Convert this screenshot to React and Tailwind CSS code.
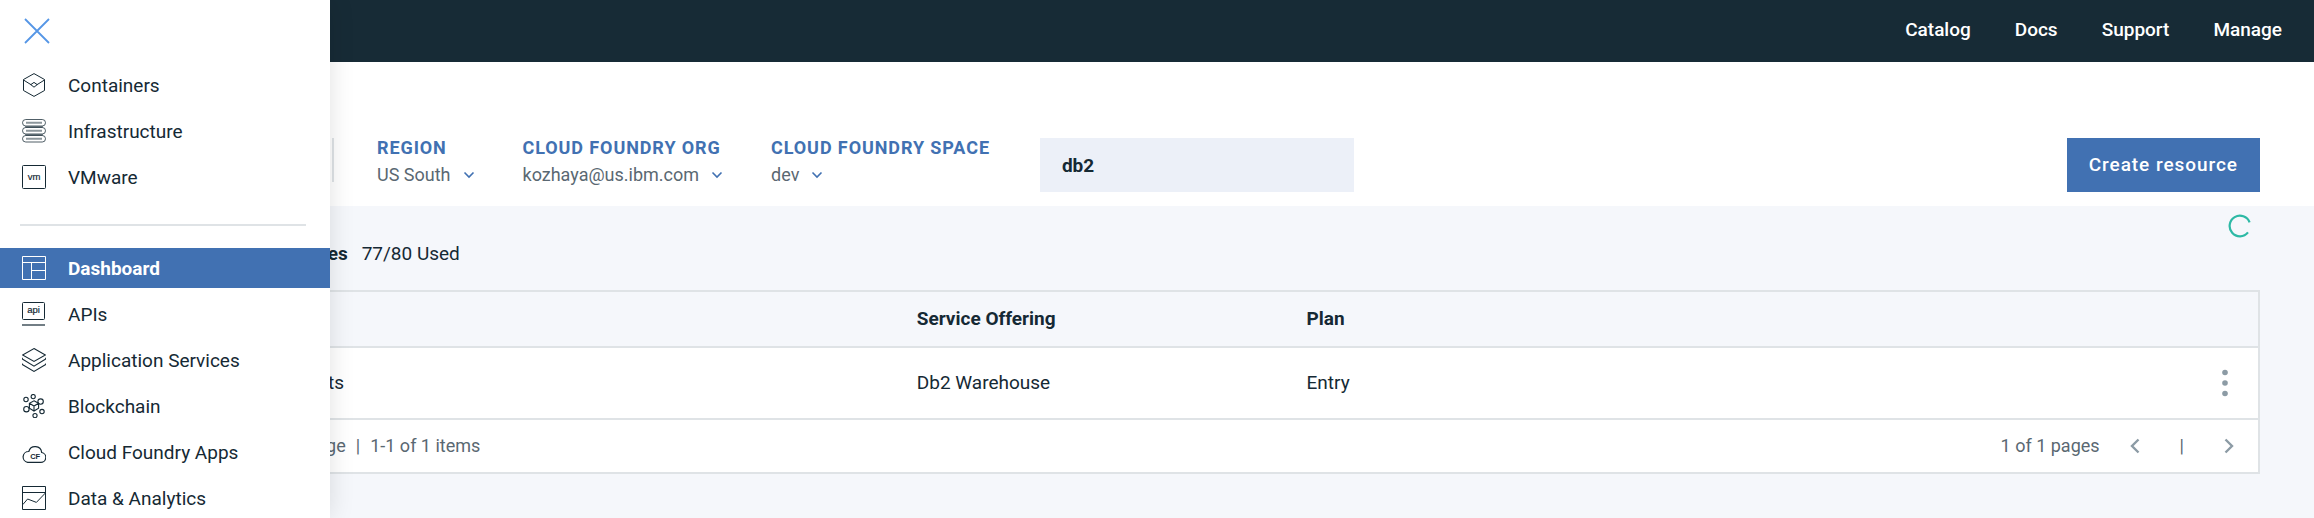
const ink = "text-[#152934]";

function ContainersIcon() {
  return (
    <svg viewBox="0 0 24 24" className="size-6" fill="none" stroke="currentColor" strokeWidth="1" aria-hidden="true">
      <path d="M12 .6 22.5 6.5v11L12 23.4 1.5 17.5v-11z" />
      <path d="M1.5 7 9.2 11.8M22.5 7 14.8 11.8" />
      <path d="M8.8 11.6 12 9.4l3.2 2.2L12 14.2z" />
    </svg>
  );
}

function InfrastructureIcon() {
  return (
    <svg viewBox="0 0 24 24" className="size-6" fill="none" stroke="currentColor" aria-hidden="true">
      <path d="M3 6h18v4H3zM3 14h18v4H3z" fill="#8c969b" stroke="none" />
      {[0.5, 8.5, 16.5].map((y) => (
        <g key={y}>
          <rect x=".5" y={y} width="23" height="6.5" rx="3.25" fill="#fff" strokeOpacity=".75" />
          <path d={`M4 ${y + 3.25}h16`} stroke="#8c969b" strokeWidth="2" />
        </g>
      ))}
    </svg>
  );
}

function VmwareIcon() {
  return (
    <svg viewBox="0 0 24 24" className="size-6" fill="none" stroke="currentColor" aria-hidden="true">
      <rect x=".5" y=".5" width="23" height="23" rx="1" />
      <text x="12" y="14.6" textAnchor="middle" fontSize="9.5" fill="currentColor" stroke="currentColor" strokeWidth=".2" fontFamily="Liberation Sans, sans-serif">vm</text>
    </svg>
  );
}

function DashboardIcon() {
  return (
    <svg viewBox="0 0 24 24" className="size-6" fill="none" stroke="currentColor" aria-hidden="true">
      <path d="M.5.5h23v23H.5zM.5 6.5h23M9.5 6.5v17M9.5 14.5h14" />
    </svg>
  );
}

function ApiIcon() {
  return (
    <svg viewBox="0 0 24 24" className="size-6" fill="none" stroke="currentColor" aria-hidden="true">
      <rect x=".5" y=".5" width="22" height="17" rx="1" />
      <path d="M0 23h23" strokeWidth="1.5" strokeOpacity=".8" />
      <text x="11.5" y="11" textAnchor="middle" fontSize="9.5" fill="currentColor" stroke="currentColor" strokeWidth=".2" fontFamily="Liberation Sans, sans-serif">api</text>
    </svg>
  );
}

function LayersIcon() {
  return (
    <svg viewBox="0 0 24 24" className="size-6" fill="none" stroke="currentColor" strokeWidth="1.1" aria-hidden="true">
      <path d="M12 .6 23.4 7 12 13.4.6 7z" />
      <path d="M.3 9.8V11L12 18.2 23.7 11V9.8M.3 15.6v1L12 23.4l11.7-6.8v-1" />
    </svg>
  );
}

function BlockchainIcon() {
  return (
    <svg viewBox="0 0 24 24" className="size-6" fill="none" stroke="currentColor" strokeWidth="1.1" aria-hidden="true">
      <path d="M12 6.8 16.6 9.3v5L12 17l-4.6-2.7v-5zM7.4 9.3 12 12l4.6-2.7M12 12v5" />
      <circle cx="4" cy="5.5" r="2.2" />
      <circle cx="11.2" cy="2.6" r="2.1" />
      <circle cx="18.6" cy="7.6" r="2.7" />
      <circle cx="4.4" cy="15.2" r="2.7" />
      <circle cx="20" cy="17.6" r="2.2" />
      <circle cx="13" cy="21.6" r="2.1" />
    </svg>
  );
}

function CloudFoundryIcon() {
  return (
    <svg viewBox="0 0 24 24" className="size-6" fill="none" stroke="currentColor" strokeWidth="1.2" aria-hidden="true">
      <path d="M5.6 22.4h12.8a5 5 0 0 0 1.3-9.9 6.6 6.6 0 0 0-12.9-1 5.5 5.5 0 0 0-1.2 10.9z" />
      <text x="13.2" y="19" textAnchor="middle" fontSize="7.5" fontWeight="700" fill="currentColor" stroke="none" fontFamily="Liberation Sans, sans-serif">CF</text>
    </svg>
  );
}

function AnalyticsIcon() {
  return (
    <svg viewBox="0 0 24 24" className="size-6" fill="none" stroke="currentColor" aria-hidden="true">
      <path d="M.5.5h23v23H.5zM.5 6.5h23" />
      <path d="M.8 18.6 5.6 13l8.8 3.4L23.4 7" />
    </svg>
  );
}

const platforms = [
  { label: "Containers", Icon: ContainersIcon },
  { label: "Infrastructure", Icon: InfrastructureIcon },
  { label: "VMware", Icon: VmwareIcon },
];

const services = [
  { label: "Dashboard", Icon: DashboardIcon, active: true },
  { label: "APIs", Icon: ApiIcon },
  { label: "Application Services", Icon: LayersIcon },
  { label: "Blockchain", Icon: BlockchainIcon },
  { label: "Cloud Foundry Apps", Icon: CloudFoundryIcon },
  { label: "Data & Analytics", Icon: AnalyticsIcon },
];

function NavList({ items }) {
  return (
    <ul className="flex flex-col gap-1.5">
      {items.map(({ label, Icon, active }) => (
        <li key={label}>
          <a
            href="#"
            aria-current={active ? "page" : undefined}
            className={
              active
                ? "flex h-10 items-center gap-[22px] bg-[#4171b2] pl-[22px] font-bold text-white"
                : `flex h-10 items-center gap-[22px] pl-[22px] ${ink}`
            }
          >
            <Icon />
            <span className="pt-0.5">{label}</span>
          </a>
        </li>
      ))}
    </ul>
  );
}

function Drawer() {
  return (
    <aside className="absolute inset-y-0 left-0 z-10 w-[330px] overflow-hidden bg-white shadow-[0_0_24px_rgba(0,0,0,0.12)]">
      <div className="flex h-[65px] items-start pt-[18px] pl-6">
        <button type="button" aria-label="Close menu" className="text-[#5596e6]">
          <svg viewBox="0 0 26 26" className="size-[26px]" fill="none" stroke="currentColor" strokeWidth="1.8">
            <path d="M1 1l24 24M25 1 1 25" />
          </svg>
        </button>
      </div>
      <nav aria-label="Services">
        <NavList items={platforms} />
        <hr className="mt-[27px] mr-6 mb-[22px] ml-5 border-t-2 border-[#dfe3e6]" />
        <NavList items={services} />
      </nav>
    </aside>
  );
}

function Filter({ label, value }) {
  return (
    <div className="flex flex-col text-lg">
      <span className="leading-5 font-bold tracking-wider text-[#4171b2] uppercase">{label}</span>
      <button type="button" aria-label={`${label}: ${value}`} className="flex items-center gap-3 leading-[34px] text-[#5a6872]">
        {value}
        <svg viewBox="0 0 12 8" className="h-2 w-3" fill="none" stroke="#4171b2" strokeWidth="1.6" aria-hidden="true">
          <path d="M1.5 1.5 6 6l4.5-4.5" />
        </svg>
      </button>
    </div>
  );
}

function Chevron({ d }) {
  return (
    <svg viewBox="0 0 10 16" className="h-4 w-2.5" fill="none" stroke="#8c9ba5" strokeWidth="2.4" aria-hidden="true">
      <path d={d} />
    </svg>
  );
}

export default function App() {
  return (
    <div className={`relative min-h-screen overflow-hidden bg-[#f5f7fb] font-['Roboto',sans-serif] text-[19px] ${ink}`}>
      <Drawer />

      <header className="flex h-[62px] items-center justify-end bg-[#172b36] pr-8 pb-0.5">
        <nav aria-label="Global" className="flex gap-11 font-medium text-white">
          {["Catalog", "Docs", "Support", "Manage"].map((item) => (
            <a key={item} href="#">{item}</a>
          ))}
        </nav>
      </header>

      <section className="flex h-36 items-end bg-white pr-[54px] pb-3.5 pl-[332px]">
        <div className="flex flex-1 items-start">
          <div className="h-11 w-0.5 bg-[#dfe3e6]" />
          <div className="ml-[43px] flex gap-12">
            <Filter label="Region" value="US South" />
            <Filter label="Cloud Foundry Org" value="kozhaya@us.ibm.com" />
            <Filter label="Cloud Foundry Space" value="dev" />
          </div>
          <input
            type="text"
            aria-label="Filter resources"
            defaultValue="db2"
            className="ml-[50px] h-[54px] w-[314px] bg-[#ecf0f8] px-[22px] font-bold"
          />
        </div>
        <button type="button" className="h-[54px] bg-[#4171b2] px-[22px] font-medium tracking-wider text-white">
          Create resource
        </button>
      </section>

      <main className="px-[54px]">
        <div className="flex h-[84px] justify-between pt-2">
          <h2 className="flex items-center pt-1 pl-[220px] leading-10">
            <span className="font-bold">Services</span>
            <span className="ml-3.5">77/80 Used</span>
          </h2>
          <svg viewBox="0 0 24 24" className="mr-2 size-6" fill="none" stroke="#2db9a5" strokeWidth="2.2" role="img" aria-label="Loading">
            <path d="M21.6 8.4A10.3 10.3 0 1 0 20 18.4" />
          </svg>
        </div>

        <div className="border-2 border-[#dfe3e6] bg-white">
          <table className="w-full table-fixed border-separate border-spacing-0 text-left">
            <thead>
              <tr className="h-14 bg-[#f5f7fb] *:border-b-2 *:border-[#dfe3e6]">
                <th scope="col" className="w-[39%]" aria-label="Name" />
                <th scope="col" className="w-[17.7%] pl-0.5 font-bold">Service Offering</th>
                <th scope="col" className="pl-0.5 font-bold">Plan</th>
                <th scope="col" className="w-20" aria-label="Actions" />
              </tr>
            </thead>
            <tbody>
              <tr className="h-18 *:border-b-2 *:border-[#dfe3e6]">
                <td className="pl-[232px]">assets</td>
                <td className="pl-0.5">Db2 Warehouse</td>
                <td className="pl-0.5">Entry</td>
                <td>
                  <button type="button" aria-label="More actions" className="ml-auto flex w-[66px] justify-center">
                    <svg viewBox="0 0 6 28" className="h-7 w-1.5" fill="#8c9ba5">
                      <circle cx="3" cy="3.5" r="2.8" />
                      <circle cx="3" cy="14" r="2.8" />
                      <circle cx="3" cy="24.5" r="2.8" />
                    </svg>
                  </button>
                </td>
              </tr>
            </tbody>
          </table>
          <div className="flex h-[52px] items-center justify-between pr-6 pl-[220px] text-lg text-[#5a6872]">
            <div className="flex gap-2.5">
              <span>per page</span>
              <span>|</span>
              <span>1-1 of 1 items</span>
            </div>
            <div className="flex items-center">
              <span className="mr-[30px]">1 of 1 pages</span>
              <button type="button" aria-label="Previous page"><Chevron d="M8.5 1.5 2 8l6.5 6.5" /></button>
              <span className="mx-10">|</span>
              <button type="button" aria-label="Next page"><Chevron d="M1.5 1.5 8 8l-6.5 6.5" /></button>
            </div>
          </div>
        </div>
      </main>
    </div>
  );
}
